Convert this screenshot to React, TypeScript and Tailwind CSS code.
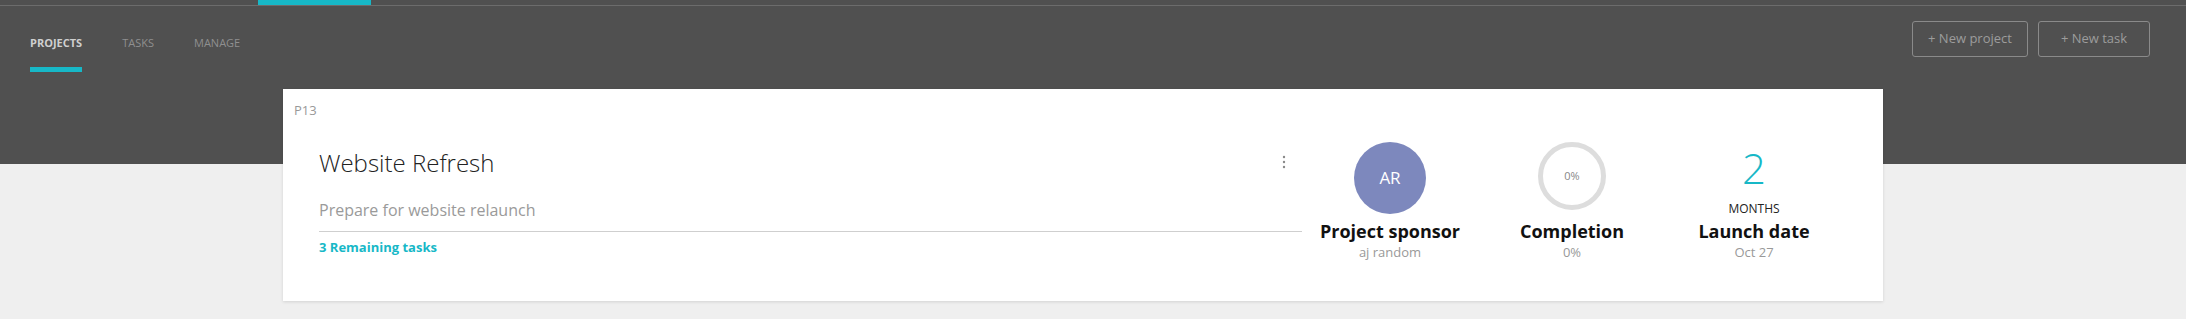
import React from 'react';

const font = { fontFamily: '"Open Sans", "Liberation Sans", sans-serif' };

const NavTab: React.FC<{ label: string; active?: boolean }> = ({ label, active }) => (
  <div className="flex flex-col">
    <span
      className={`text-[11px] leading-[16px] uppercase ${
        active ? 'font-bold text-[#cfcfcf]' : 'text-[#8f8f8f]'
      }`}
    >
      {label}
    </span>
    <div className={`mt-[16px] h-[5px] w-full ${active ? 'bg-[#17b8c7]' : ''}`} />
  </div>
);

const HeaderButton: React.FC<{ label: string; width: string }> = ({ label, width }) => (
  <button
    type="button"
    className={`${width} h-[36px] rounded-[3px] border border-[#8a8a8a] text-[13px] text-[#9c9c9c]`}
  >
    {label}
  </button>
);

const Kebab = () => (
  <svg width="4" height="14" viewBox="0 0 4 14" className="mt-[8px]">
    <circle cx="2" cy="2" r="1.2" fill="#8a8a8a" />
    <circle cx="2" cy="7" r="1.2" fill="#8a8a8a" />
    <circle cx="2" cy="12" r="1.2" fill="#8a8a8a" />
  </svg>
);

export default function App() {
  return (
    <div className="min-h-screen bg-[#efefef]" style={font}>
      <header className="h-[164px] bg-[#505050] flex flex-col">
        <div className="h-[5px] flex">
          <div className="ml-[258px] w-[113px] h-full bg-[#17b8c7]" />
        </div>
        <div className="h-px bg-[#6c6c6c]" />
        <div className="flex justify-between">
          <nav className="flex gap-[40px] pl-[30px] pt-[29px]">
            <NavTab label="Projects" active />
            <NavTab label="Tasks" />
            <NavTab label="Manage" />
          </nav>
          <div className="flex gap-[10px] pt-[15px] pr-[36px]">
            <HeaderButton label="+ New project" width="w-[116px]" />
            <HeaderButton label="+ New task" width="w-[112px]" />
          </div>
        </div>
      </header>

      <div className="relative -mt-[75px] ml-[283px] w-[1600px] h-[212px] bg-white shadow-[0_1px_3px_rgba(0,0,0,0.12)]">
        <div className="pt-[12px] pl-[11px] text-[13px] leading-[18px] text-[#999]">P13</div>
        <div className="flex">
          <div className="ml-[36px] w-[983px] pt-[28px]">
            <div className="flex justify-between pr-[16px]">
              <h2 className="text-[24px] leading-[32px] font-light text-[#222]">Website Refresh</h2>
              <Kebab />
            </div>
            <div className="mt-[19px] pb-[9px] border-b border-[#cfcfcf]">
              <p className="text-[16px] leading-[24px] text-[#9a9a9a]">Prepare for website relaunch</p>
            </div>
            <div className="mt-[6px] text-[13px] leading-[18px] font-bold text-[#17b8c7]">3 Remaining tasks</div>
          </div>

          <div className="flex -ml-[3px]">
            <div className="w-[182px] flex flex-col items-center pt-[23px]">
              <div className="w-[72px] h-[72px] rounded-full bg-[#7d88bd] flex items-center justify-center text-[17px] text-white">
                AR
              </div>
              <div className="mt-[5px] text-[18px] leading-[24px] font-bold text-[#111]">Project sponsor</div>
              <div className="text-[13px] leading-[18px] text-[#999]">aj random</div>
            </div>
            <div className="w-[182px] flex flex-col items-center pt-[23px]">
              <div className="h-[72px] flex items-start">
                <div className="w-[68px] h-[68px] rounded-full border-[5px] border-[#dddddd] flex items-center justify-center text-[11px] text-[#888]">
                  0%
                </div>
              </div>
              <div className="mt-[5px] text-[18px] leading-[24px] font-bold text-[#111]">Completion</div>
              <div className="text-[13px] leading-[18px] text-[#999]">0%</div>
            </div>
            <div className="w-[182px] flex flex-col items-center pt-[27px]">
              <div className="text-[42px] leading-[44px] font-light text-[#17b8c7]">2</div>
              <div className="mt-[11px] text-[12px] leading-[16px] uppercase text-[#222]">Months</div>
              <div className="mt-[2px] text-[18px] leading-[24px] font-bold text-[#111]">Launch date</div>
              <div className="text-[13px] leading-[18px] text-[#999]">Oct 27</div>
            </div>
          </div>
        </div>
      </div>
    </div>
  );
}
